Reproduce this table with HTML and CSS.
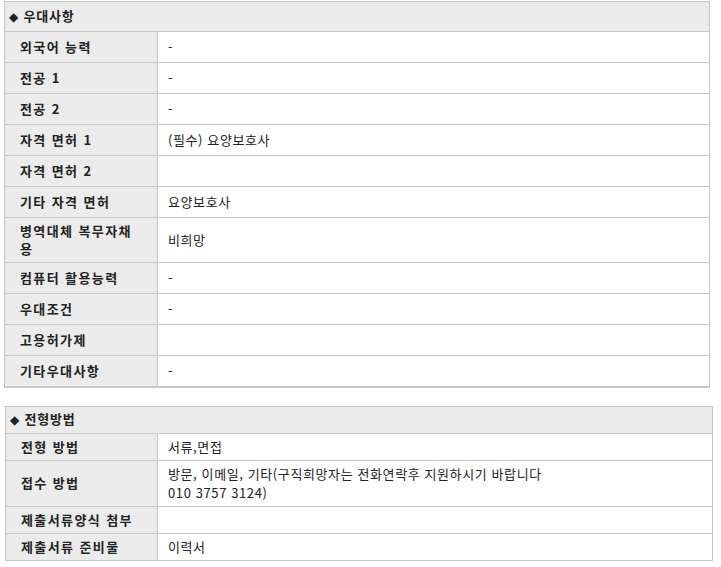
FILE: index.html
```html
<!DOCTYPE html>
<html lang="ko">
<head>
<meta charset="utf-8">
<link rel="stylesheet" href="styles.css">
</head>
<body>
<div class="page">
  <table class="info t1">
    <colgroup><col class="c-label"><col class="c-value"></colgroup>
    <tr class="head"><th colspan="2"><span class="dia">◆</span> 우대사항</th></tr>
    <tr><th>외국어 능력</th><td>-</td></tr>
    <tr><th>전공 1</th><td>-</td></tr>
    <tr><th>전공 2</th><td>-</td></tr>
    <tr><th>자격 면허 1</th><td>(필수) 요양보호사</td></tr>
    <tr><th>자격 면허 2</th><td></td></tr>
    <tr><th>기타 자격 면허</th><td>요양보호사</td></tr>
    <tr class="tall"><th>병역대체 복무자채<br>용</th><td>비희망</td></tr>
    <tr><th>컴퓨터 활용능력</th><td>-</td></tr>
    <tr><th>우대조건</th><td>-</td></tr>
    <tr><th>고용허가제</th><td></td></tr>
    <tr><th>기타우대사항</th><td>-</td></tr>
  </table>
  <table class="info t2">
    <colgroup><col class="c-label2"><col class="c-value"></colgroup>
    <tr class="head"><th colspan="2"><span class="dia">◆</span> 전형방법</th></tr>
    <tr><th>전형 방법</th><td>서류,면접</td></tr>
    <tr class="tall"><th>접수 방법</th><td>방문, 이메일, 기타(구직희망자는 전화연락후 지원하시기 바랍니다<br>010 3757 3124)</td></tr>
    <tr><th>제출서류양식 첨부</th><td></td></tr>
    <tr><th>제출서류 준비물</th><td>이력서</td></tr>
  </table>
</div>
</body>
</html>
```

FILE: styles.css
```css
html, body {
  margin: 0;
  padding: 0;
  background: #ffffff;
}
.page {
  padding: 1px 0 0 4px;
  font-family: "Noto Sans CJK KR", "Noto Sans", sans-serif;
  font-size: 13px;
  letter-spacing: 0.6px;
  color: #222;
}
.info {
  border-collapse: collapse;
  table-layout: fixed;
}
.c-label { width: 153px; }
.c-label2 { width: 152px; }
.info th, .info td {
  border: 1px solid #c6c6c6;
  padding: 0;
  text-align: left;
  vertical-align: middle;
  line-height: 18px;
}
.info th {
  background: #ebebeb;
  font-weight: bold;
  color: #222;
  padding-left: 15px;
  letter-spacing: 1.4px;
}
.info td {
  background: #fff;
  color: #222;
  padding-left: 10px;
}
.info .head th {
  padding-left: 4px;
  letter-spacing: 0.8px;
}
.dia {
  font-size: 12px;
  font-family: "DejaVu Sans", sans-serif;
}
.t1 {
  width: 706px;
  border-bottom: 2px solid #c6c6c6;
}
.t1 tr { height: 31px; }
.t1 .head { height: 30px; }
.t1 .tall { height: 45px; }
.t2 {
  margin-top: 18px;
  margin-left: 1px;
  width: 708px;
}
.t2 tr { height: 27px; }
.t2 .head { height: 27px; }
.t2 .tall { height: 46px; }
.t2 td { line-height: 19px; }
```
